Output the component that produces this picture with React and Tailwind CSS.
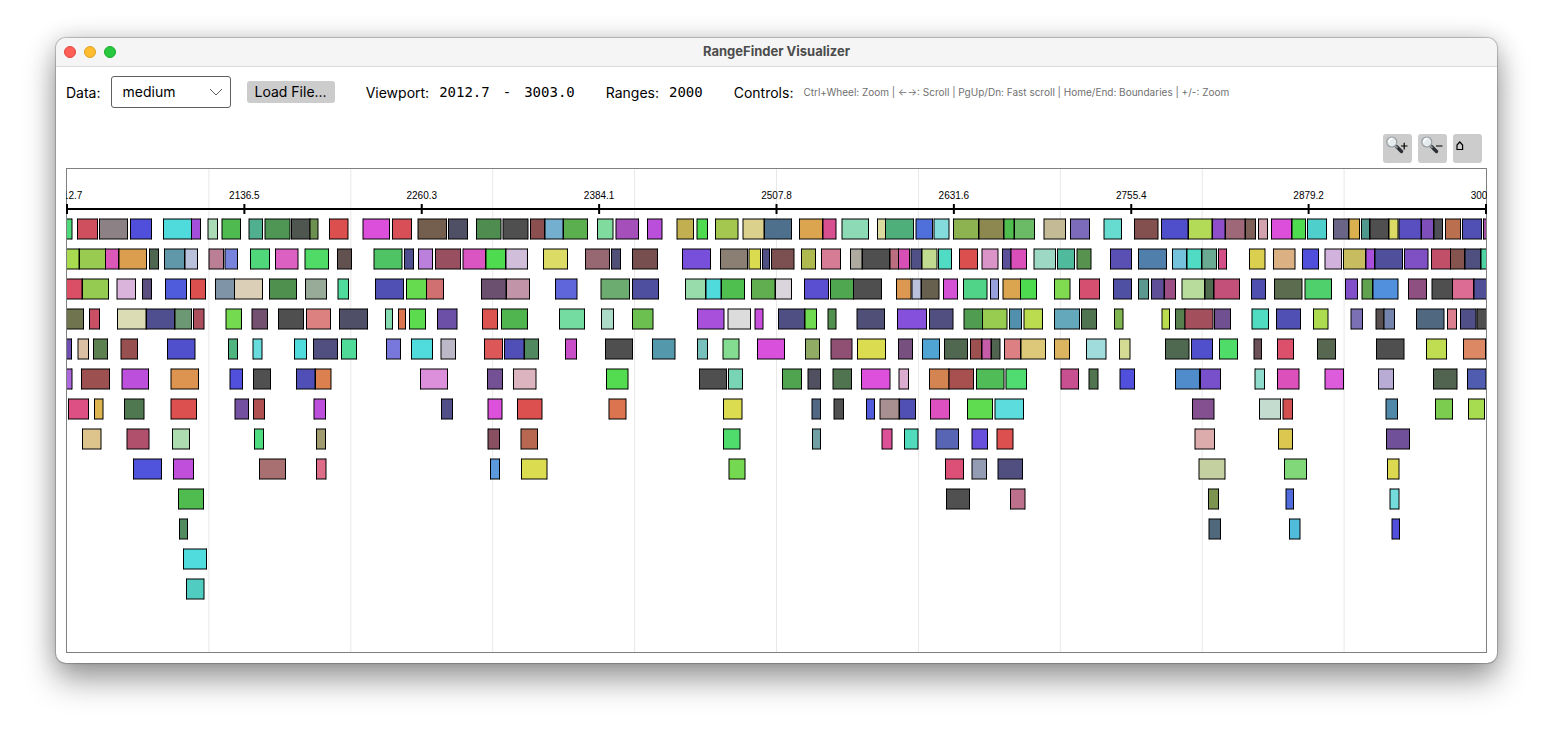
import React from "react";

const PLOT_LEFT = 66;
const PLOT_WIDTH = 1421;
const ROW_TOP = 51;
const ROW_PITCH = 30;
const BAR_HEIGHT = 20;

// One string per lane; each entry is "start end colour".
const LANES = [
  "66.5 72 4fdb7c,77.5 97.5 cf4f5f,99.5 127.5 8c8285,130.5 151.5 4f4fdb,163.5 191.5 4fdbdb,191.5 200.5 a44fdb,208 217.5 aadbb6,222 240.5 4fba4f,249 262.5 50af8e,265 290 4f9655,291.5 310 4f554f,310 318 6c914f,329.5 348 db4f4f,363 389.5 db4fdb,392.5 411.5 d94f58,418 446.5 745f4f,448.5 467.5 4f4f66,476.5 501 4f8c50,503 528 4f4f4f,530.5 544.5 8c4f4f,545 563 74afcf,563.5 587.5 5baf4f,597.5 613 80db9e,616 638.5 a44fba,647.5 662 ba4fdb,677 693.5 c2af4f,697 707.5 4fdb4f,715.5 738 a4c84f,743 764 dbd08c,764.5 791.5 4f708c,799.5 822.5 dba44f,823 836 d74f8f,842 868.5 8cdbb6,877.5 885.5 dbdba0,885.5 913.5 4faf7b,916 932.5 4f70db,934 949 84dbdb,953.5 978.5 8cb350,979 1003.5 8c8850,1004 1014 4fbe4f,1014.5 1034.5 6aba66,1044 1065.5 c4ba96,1070.5 1089.5 7c6aba,1104 1121.5 66dbcf,1134.5 1158 834f4f,1161.5 1188 4f4fcb,1188.5 1212 b4db58,1212.5 1225 8f4fcb,1225.5 1245 9e6878,1245.5 1255.5 7e6058,1258.5 1267.5 d4a2ae,1271.5 1291.5 db4fdb,1292 1305.5 4fdb4f,1307.5 1326.5 4fcfcb,1333.5 1348.5 6a6486,1349 1359.5 dbb04f,1361.5 1369.5 4f988e,1370 1388.5 4f4f4f,1389 1398 dbdb66,1399 1421 5a4fc0,1421.5 1433.5 7e4fba,1434 1442.5 4f4f58,1445.5 1460.5 ba704f,1462.5 1481.5 4f4fb4,1483.5 1487 a44fa4",
  "66.5 79 a8db4f,79.5 105.5 98cb4f,105.5 118.5 db58b8,119 146.5 db9e4f,149.5 158.5 4f6650,164.5 184.5 6098aa,185 197.5 bac2db,209 223.5 ba7f94,225 237.5 7884db,250.5 269.5 4fd77a,275.5 298 db60c2,305 328.5 4fdb66,337.5 351.5 62524f,374 402 4fc464,404.5 413.5 4f4f90,418.5 432.5 ba80db,435.5 460.5 984f60,463 485.5 db55c2,486 505.5 4fdb4f,506 527.5 d0beda,543.5 567.5 dbdb66,585.5 609.5 986872,611.5 620.5 4f4f78,632.5 657.5 784f4f,682.5 710.5 784fdb,720.5 747.5 8b7f74,749 760.5 dbdb4f,762.5 769.5 4f4f84,771.5 794 7c5050,801.5 815.5 aeba50,821.5 840.5 d67c94,850.5 862 aeaaa0,862.5 889.5 4f4f4f,890 898.5 ba6e80,898.5 909.5 d74fb4,911 921.5 504f86,922 937 c0db90,938.5 951.5 4fdbc4,959.5 977.5 db4f4f,982 998 db94c8,1002.5 1011 5a4f98,1011 1026.5 db4fba,1034 1055.5 9cd8c4,1057.5 1074.5 50ba9c,1077 1091 58924f,1110.5 1131.5 5a4fb2,1138.5 1166.5 4f7faa,1172.5 1186.5 74c2db,1187 1201.5 4fdbc4,1202 1216.5 6aaa92,1218.5 1226.5 d44f88,1249.5 1265 dbcf4f,1273.5 1295 dbb082,1302.5 1318.5 4f4fdb,1325 1341.5 d0b2dc,1343.5 1365.5 c8bc60,1366 1374.5 a850db,1375 1402.5 4f4f9c,1404.5 1428 7e50c4,1431.5 1450.5 c24f68,1450.5 1464.5 86544f,1465 1480.5 4f4f80,1481 1487 4fd4a4",
  "66.5 82 db4f66,82.5 108.5 94cb50,117 135.5 dbb4dc,142.5 151.5 5a4f7e,165.5 186.5 4f5cdb,190.5 205.5 db4f4f,215.5 234.5 8094a8,234.5 262.5 dccfb8,269.5 296.5 4f904f,305.5 326.5 98aa98,338 348.5 4fdb9c,375.5 403.5 4f4fb4,406.5 426.5 66db50,426.5 443.5 d07070,481.5 506 6c5070,506.5 529.5 c294a8,555.5 577 5f66db,601 629.5 6cac70,632.5 658.5 4f4fa0,685.5 705.5 98dcac,706 721 4fdbdb,721.5 744.5 4fc04f,751.5 775 60ae50,775.5 791.5 dad4dc,804.5 828.5 5a4fd0,830.5 853.5 4fa84f,853.5 881.5 4f4f4f,896.5 911 dc9850,912 921 b8c0dc,921.5 939 68604f,943.5 957.5 d450d4,963.5 987 50d488,990.5 998.5 98a0dc,1003 1020.5 dba44f,1020.5 1036.5 4fdb4f,1054.5 1070 80db50,1079.5 1099.5 d44f70,1113.5 1131.5 4f4fa4,1138.5 1148.5 5c9890,1151.5 1164 5f4f98,1164.5 1175.5 9c4f84,1182 1204.5 b8dc9c,1205 1213.5 4f6c4f,1214 1239.5 c25078,1251.5 1265.5 4f4fb0,1274.5 1302 5c6c4f,1305 1331.5 50d06c,1345.5 1357.5 824fcb,1362 1372.5 60a250,1373 1398 5090dc,1408.5 1426.5 8e5080,1432 1452.5 4f4f4f,1452.5 1473.5 dc6c94,1474 1487 504f98",
  "66.5 83.5 70744f,89.5 99.5 cb4f64,117.5 146 dcdcb4,146.5 174.5 4f4f90,175 191.5 6c9874,193.5 204 ac4f5c,226 241.5 74db50,252 267.5 745070,278.5 303.5 4f4f4f,306.5 330.5 dc8080,339.5 367.5 4f4f68,385.5 392.5 84dcb0,398.5 405.5 dc7450,409.5 425.5 5cdb4f,437.5 457 6c50a8,482.5 497.5 dc544f,501.5 527.5 50b44f,559.5 584.5 74dca0,601.5 613.5 acdcc8,632.5 653 6cc050,697.5 724 a850dc,728 750.5 dcdcdc,755 763 c84fdc,778.5 804.5 504f84,805 816.5 70db50,828 836 50904f,857 884.5 504f78,897.5 926.5 8450dc,929.5 953 504f80,964 982.5 509c50,982.5 1007 98cc50,1009.5 1021.5 5090ac,1024 1042.5 bcdc50,1054.5 1079.5 64a8bc,1081.5 1096.5 50744f,1114.5 1123 80b44f,1162 1169.5 bcdc50,1175.5 1185 58804f,1185 1213 a4505c,1214.5 1230.5 705090,1252 1268.5 50dcc0,1276.5 1300.5 504fb4,1313.5 1328 acdb50,1351 1362.5 7c70b4,1376 1384 584f50,1384 1394.5 7484ac,1416.5 1444 506880,1447.5 1456.5 dc8090,1460.5 1476 504f88,1477 1487 4f4f4f",
  "66.5 71.5 6c4fb0,78 88.5 dcc0a4,93.5 107.5 5c804f,121 137.5 984f50,167.5 195 504fcc,228.5 237.5 50b480,253 262 68dcdc,294.5 306.5 50dcdc,313.5 337.5 504f80,341.5 356.5 50dc98,386.5 400.5 7878dc,411.5 432.5 50dcdc,441 455.5 bcb8c8,484.5 502.5 dc5858,504.5 524 504fb8,524.5 538.5 508860,565.5 576.5 c84fc8,605.5 632.5 4f4f4f,652.5 675 5498ac,697.5 707.5 78c0bc,723 739 84dc90,757.5 784.5 d850dc,805.5 819.5 90ac64,831 852 905074,857.5 885.5 dcdc50,898.5 912.5 785080,922.5 939.5 50a4d4,944.5 967.5 506850,970.5 981.5 9c5050,982 991 c45ca8,991.5 1000 506450,1004.5 1020.5 dc8084,1021 1045.5 dcc878,1054.5 1069.5 dcb460,1086.5 1106 a0dcdc,1119.5 1130 d4dc94,1165.5 1189 4f6850,1191.5 1212.5 504fcc,1219.5 1237.5 50dc68,1254 1261.5 6c5058,1277.5 1293.5 dc506c,1317.5 1335.5 586850,1376.5 1404 4f4f4f,1426.5 1446.5 c0dc50,1463.5 1485.5 dc8864",
  "66.5 72 ac68dc,81.5 109.5 9c5050,122 148.5 bc50dc,171 198.5 dc9450,230 242.5 5050dc,253.5 270.5 505050,296.5 315 504fb8,315.5 331 dc804f,420.5 447.5 dc90dc,487.5 502.5 745094,513.5 536 dcb4c0,606.5 628 54dc50,699.5 726.5 4f4f4f,728.5 742.5 78d4b4,782.5 801.5 50a450,808 820.5 505060,833 851.5 507450,861.5 890 dc50dc,899 908.5 dcacd0,929.5 949 d48450,949 973.5 a85050,976.5 1004 50bc58,1006 1026.5 50dc70,1061 1078.5 c84f90,1089 1098 50744f,1120 1134.5 5050dc,1175.5 1199.5 508ccc,1200.5 1220.5 7850cc,1255 1264.5 90dccc,1277.5 1299 dc50bc,1325 1343.5 dc5cdc,1378.5 1393.5 b8acd4,1433.5 1457 50644f,1467.5 1486 505cb0",
  "68.5 88.5 dc5084,94.5 103 dcb450,124.5 144 507850,171 196.5 dc5050,235 248.5 7450a0,253.5 264.5 b05050,314 325.5 bc50dc,441.5 452.5 504f88,488 502 dc50dc,517.5 542 dc5050,609 626 dc7450,723.5 742 dcdc50,812 820.5 506884,834 843.5 505050,866.5 874.5 505cdc,880 899 a89090,899.5 915.5 504fb4,930.5 949.5 dc50c0,967.5 992.5 60dc50,995 1023.5 5cdcdc,1192.5 1214 845090,1259.5 1280.5 c4dcd0,1283 1292.5 d45050,1386 1397.5 5088a8,1435.5 1452.5 7ccc50,1468.5 1484.5 a8dc50",
  "82.5 101 dcc48c,127 149 b0506c,172.5 189.5 acdcb0,254.5 263.5 50dc80,316.5 325.5 a09c70,488 499.5 885060,521 537.5 b86850,723.5 740 50dc6c,812.5 820.5 70a0a4,882 892 dc5098,904.5 918 50dcbc,936 958.5 5864b4,972 987.5 6850dc,997 1013 dc5050,1195 1214.5 dcacac,1278.5 1292.5 dcc850,1386.5 1409.5 705098",
  "133.5 161.5 5054dc,173.5 193.5 c050dc,259.5 285.5 a87070,316.5 326 dc6c88,490.5 499.5 5c98dc,521.5 547 dcdc50,729 745 74d850,945.5 963.5 dc5078,972 986.5 949cb4,998 1022.5 504f80,1199 1225 c4d0a0,1284.5 1306.5 80d878,1387.5 1399 dcd850",
  "178.5 203.5 50bc50,946.5 969.5 505050,1010.5 1025 bc708c,1208.5 1218.5 7c9450,1286 1293.5 506cdc,1390 1399 74dcdc",
  "179.5 187.5 508c60,1209 1220.5 50687c,1289.5 1300 50bcdc,1392 1399.5 5050dc",
  "183.5 206.5 50dcdc",
  "186.5 204 50ccc0",
].map((lane) =>
  lane.split(",").map((entry) => {
    const [start, end, color] = entry.split(" ");
    return { start: Number(start), end: Number(end), color: "#" + color };
  })
);

const TICKS = ["2012.7", "2136.5", "2260.3", "2384.1", "2507.8", "2631.6", "2755.4", "2879.2", "3003.0"];

const pct = (value) => `${(value / PLOT_WIDTH) * 100}%`;

// A bar is a black half-transparent surround, a solid body and a half-transparent inner edge,
// which gives its outline a soft two-pixel top and bottom.
function Bar({ bar, row }) {
  const x = pct(bar.start - PLOT_LEFT);
  const width = pct(bar.end - bar.start);
  const y = ROW_TOP + row * ROW_PITCH;
  return (
    <g>
      <rect x={x} y={y} width={width} height={BAR_HEIGHT} fill={bar.color} />
      <line x1={x} x2={pct(bar.end - PLOT_LEFT)} y1={y} y2={y} stroke="#000" strokeOpacity="0.5" strokeWidth="2" />
      <line
        x1={x}
        x2={pct(bar.end - PLOT_LEFT)}
        y1={y + BAR_HEIGHT}
        y2={y + BAR_HEIGHT}
        stroke="#000"
        strokeOpacity="0.5"
        strokeWidth="2"
      />
      <line x1={x} x2={x} y1={y - 0.5} y2={y + BAR_HEIGHT + 0.5} stroke="#000" strokeWidth="1" />
      <line
        x1={pct(bar.end - PLOT_LEFT)}
        x2={pct(bar.end - PLOT_LEFT)}
        y1={y - 0.5}
        y2={y + BAR_HEIGHT + 0.5}
        stroke="#000"
        strokeWidth="1"
      />
    </g>
  );
}

function RangeChart() {
  return (
    <svg className="block h-full w-full" role="img" aria-label="Ranges in the viewport">
      {Array.from({ length: 9 }, (_, i) => {
        const x = pct(1 + 141.9 * (i + 1));
        return <line key={i} x1={x} x2={x} y1="0" y2="100%" stroke="#e8e8e8" strokeWidth="1" />;
      })}
      {LANES.map((lane, row) => lane.map((bar) => <Bar key={`${row}-${bar.start}`} bar={bar} row={row} />))}
      <rect x="0" y="0" width="100%" height="100%" fill="none" stroke="#808080" strokeWidth="2" />
      <line x1="0" x2="100%" y1="41" y2="41" stroke="#000" strokeWidth="2" />
      {TICKS.map((label, i) => {
        const x = pct(1 + 177.375 * i);
        return (
          <g key={label}>
            <line x1={x} x2={x} y1="36" y2="46" stroke="#000" strokeWidth="2" />
            <text x={x} y="31" textAnchor="middle" className="fill-black font-['Liberation_Sans',sans-serif] text-[10px]">
              {label}
            </text>
          </g>
        );
      })}
    </svg>
  );
}

function Magnifier({ sign }) {
  return (
    <svg viewBox="0 0 29 29" className="size-[29px]" aria-hidden="true">
      <path d="M13.5 12.5 L18.5 17.5" stroke="#2b2f33" strokeWidth="3.4" strokeLinecap="round" />
      <path d="M12 11.5 L14.5 14" stroke="#8b9196" strokeWidth="2" />
      <circle cx="8.8" cy="8" r="5" fill="#e6ebee" stroke="#979da1" strokeWidth="1.2" />
      <path d="M5.8 8.4 A3.2 3.2 0 0 1 9.3 4.8" stroke="#fff" strokeWidth="1.6" fill="none" />
      <path d={sign === "+" ? "M18 12 H24.5 M21.2 8.8 V15.4" : "M18 12 H24.5"} stroke="#000" strokeWidth="1.2" />
    </svg>
  );
}

const toolButton = "size-[29px] rounded-[3px] bg-[#cccccc]";
const fieldLabel = "pt-0.5";
const fieldValue = "font-['DejaVu_Sans_Mono',monospace]";

export default function App() {
  return (
    <div className="flex min-h-screen bg-white px-14 pt-[38px] pb-[74px] font-['Inter',sans-serif] text-black">
      <div className="flex min-w-0 flex-1 flex-col overflow-hidden rounded-[10px] bg-white shadow-[0_0_1px_1px_rgba(0,0,0,0.22),0_17px_32px_rgba(0,0,0,0.38),0_0_24px_rgba(0,0,0,0.16)]">
        <header className="grid h-[29px] grid-cols-3 items-center border-b border-[#d9d9d9] bg-[#f5f5f5] px-2">
          <div className="flex gap-2">
            <button type="button" aria-label="Close" className="size-3 rounded-full border border-[#e0443e] bg-[#ff5f57]" />
            <button type="button" aria-label="Minimize" className="size-3 rounded-full border border-[#dea123] bg-[#febc2e]" />
            <button type="button" aria-label="Zoom window" className="size-3 rounded-full border border-[#1aab29] bg-[#28c840]" />
          </div>
          <h1 className="pb-0.5 text-center text-[13px] leading-4 font-bold text-[#4c4c4c]">RangeFinder Visualizer</h1>
        </header>

        <div className="flex h-[50px] items-center px-[10px] text-sm whitespace-nowrap">
          <label htmlFor="dataset" className={`mr-[10px] ${fieldLabel}`}>Data:</label>
          <div className="grid items-center">
            <select
              id="dataset"
              defaultValue="medium"
              className="col-start-1 row-start-1 h-8 w-[120px] appearance-none rounded-[3px] border border-[#606060] bg-white pr-8 pl-[11px] text-sm"
            >
              <option>small</option>
              <option>medium</option>
              <option>large</option>
            </select>
            <svg viewBox="0 0 14 8" className="pointer-events-none col-start-1 row-start-1 mr-2 h-2 w-3.5 justify-self-end" aria-hidden="true">
              <path d="M1 1 L7 7 L13 1" fill="none" stroke="#606060" strokeWidth="1" />
            </svg>
          </div>
          <button type="button" className="ml-4 h-[22px] rounded-[3px] bg-[#cccccc] px-2 leading-[22px]">Load File...</button>
          <span className={`ml-[31px] ${fieldLabel}`}>Viewport:</span>
          <span className={`ml-[10px] ${fieldValue}`}>2012.7</span>
          <span className={`mx-[13px] ${fieldValue}`}>-</span>
          <span className={fieldValue}>3003.0</span>
          <span className={`ml-[31px] ${fieldLabel}`}>Ranges:</span>
          <span className={`ml-[10px] ${fieldValue}`}>2000</span>
          <span className={`ml-[31px] ${fieldLabel}`}>Controls:</span>
          <span className="ml-[10px] text-[10px] text-[#707070]">
            Ctrl+Wheel: Zoom | ←→: Scroll | PgUp/Dn: Fast scroll | Home/End: Boundaries | +/-: Zoom
          </span>
        </div>

        <main className="flex min-h-0 flex-1 flex-col gap-[5px] px-[10px] pt-[17px] pb-[10px]">
          <div className="flex justify-end gap-1.5 pr-[5px]">
            <button type="button" aria-label="Zoom in" className={toolButton}><Magnifier sign="+" /></button>
            <button type="button" aria-label="Zoom out" className={toolButton}><Magnifier sign="-" /></button>
            <button type="button" aria-label="Reset view" className={toolButton}>
              <svg viewBox="0 0 29 29" className="size-[29px]" aria-hidden="true">
                <path d="M4 15.5 V11 L6.8 8 L9.6 11 V15.5 Z" fill="none" stroke="#000" strokeWidth="1.2" />
              </svg>
            </button>
          </div>
          <div className="min-h-[440px] flex-1">
            <RangeChart />
          </div>
        </main>
      </div>
    </div>
  );
}
